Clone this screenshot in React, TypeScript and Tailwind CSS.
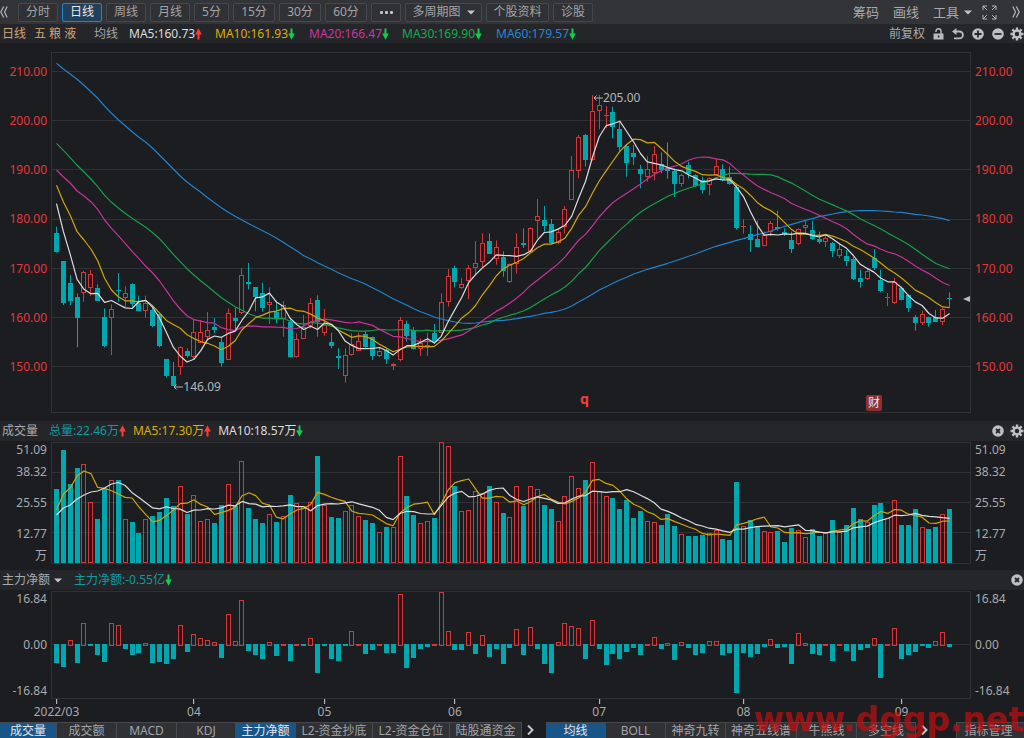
import type { ReactNode } from 'react';
import clsx from 'clsx';

// Each candle: [high, body top, body bottom, low, 1 when the day closed up]
const CANDLES: number[][] = [
  [530, 550, 606, 608, 0], [633, 633, 760, 765, 0], [675, 698, 753, 765, 0], [730, 742, 803, 892, 0],
  [663, 667, 729, 755, 1], [660, 673, 715, 738, 1], [703, 713, 753, 753, 0], [775, 802, 888, 892, 0],
  [763, 776, 803, 915, 1], [669, 719, 723, 755, 0], [709, 728, 743, 770, 1], [700, 702, 762, 770, 0],
  [737, 758, 784, 784, 0], [737, 758, 783, 803, 1], [768, 780, 828, 832, 0], [790, 793, 888, 892, 0],
  [927, 928, 977, 983, 0], [936, 977, 1007, 1007, 0], [889, 890, 950, 975, 1], [895, 904, 918, 923, 0],
  [810, 847, 920, 928, 1], [810, 847, 878, 878, 1], [786, 839, 862, 870, 1], [804, 831, 839, 850, 0],
  [862, 876, 938, 950, 0], [775, 788, 929, 930, 1], [773, 804, 812, 840, 0], [654, 676, 788, 792, 1],
  [639, 697, 701, 718, 0], [712, 712, 740, 784, 0], [698, 728, 773, 785, 0], [712, 757, 766, 822, 1],
  [752, 785, 808, 820, 0], [753, 766, 808, 860, 1], [810, 815, 921, 921, 0], [850, 868, 920, 923, 1],
  [795, 830, 867, 868, 1], [744, 758, 828, 835, 1], [736, 751, 815, 860, 0], [777, 824, 848, 857, 1],
  [848, 875, 888, 895, 0], [895, 919, 923, 957, 0], [895, 914, 979, 998, 1], [850, 882, 914, 917, 1],
  [848, 872, 902, 903, 1], [844, 852, 890, 893, 0], [860, 861, 917, 930, 0], [892, 902, 917, 922, 1],
  [895, 900, 926, 942, 0], [939, 941, 949, 960, 1], [801, 809, 929, 935, 1], [812, 823, 857, 875, 0],
  [831, 841, 898, 898, 0], [865, 880, 897, 918, 1], [848, 886, 890, 918, 1], [822, 850, 876, 882, 0],
  [730, 755, 848, 850, 1], [657, 679, 757, 770, 1], [647, 654, 695, 712, 0], [683, 703, 714, 717, 1],
  [645, 655, 692, 748, 1], [573, 638, 653, 675, 1], [550, 578, 635, 652, 1], [550, 574, 611, 612, 0],
  [571, 590, 626, 644, 1], [604, 622, 662, 680, 0], [640, 643, 697, 699, 1], [550, 590, 643, 671, 1],
  [535, 580, 586, 594, 0], [532, 535, 604, 606, 1], [447, 499, 512, 565, 1], [468, 510, 528, 545, 0],
  [507, 521, 580, 582, 0], [535, 545, 580, 583, 1], [468, 478, 530, 550, 1], [318, 360, 449, 450, 1],
  [255, 260, 362, 385, 1], [252, 254, 330, 350, 0], [135, 184, 329, 332, 1], [135, 166, 182, 238, 1],
  [168, 195, 198, 235, 1], [170, 185, 232, 265, 0], [217, 238, 291, 303, 0], [285, 289, 339, 380, 0],
  [285, 309, 320, 345, 0], [345, 357, 371, 415, 0], [318, 358, 380, 395, 1], [288, 313, 368, 391, 1],
  [307, 342, 360, 370, 0], [277, 355, 362, 386, 0], [355, 362, 401, 441, 0], [370, 376, 403, 410, 1],
  [335, 345, 373, 385, 0], [373, 376, 408, 410, 0], [380, 390, 420, 430, 0], [382, 385, 406, 436, 1],
  [326, 347, 375, 378, 1], [343, 356, 390, 394, 0], [350, 380, 402, 404, 0], [405, 411, 533, 539, 0],
  [508, 527, 529, 551, 1], [525, 551, 571, 606, 0], [512, 566, 590, 590, 0], [545, 556, 587, 589, 1],
  [513, 520, 545, 558, 1], [482, 531, 538, 542, 0], [535, 547, 553, 558, 0], [545, 570, 598, 609, 0],
  [535, 538, 583, 586, 1], [510, 524, 533, 550, 1], [512, 539, 568, 570, 0], [545, 567, 577, 582, 0],
  [555, 563, 577, 591, 1], [576, 580, 603, 621, 0], [580, 598, 617, 624, 1], [600, 618, 633, 648, 0],
  [620, 627, 686, 690, 0], [659, 683, 695, 713, 0], [655, 664, 686, 690, 1], [597, 625, 654, 660, 0],
  [659, 689, 724, 727, 0], [729, 740, 743, 768, 1], [683, 697, 759, 762, 1], [710, 713, 750, 751, 0],
  [733, 735, 773, 786, 0], [795, 801, 819, 842, 0], [782, 793, 819, 825, 1], [800, 801, 818, 830, 0],
  [780, 801, 815, 816, 0], [773, 778, 815, 825, 1], [727, 743, 748, 773, 0],
];

const MA60 = [
  40, 57, 72, 88, 106, 125, 145, 168, 190, 209, 227, 245, 262, 277, 295, 315, 336, 357, 378, 396,
  412, 427, 443, 458, 473, 487, 499, 510, 521, 532, 542, 553, 564, 577, 590, 603, 617, 627, 638, 648,
  658, 668, 677, 686, 694, 703, 713, 724, 735, 746, 756, 766, 776, 785, 793, 801, 807, 812, 816, 819,
  820, 819, 816, 814, 812, 811, 809, 806, 802, 799, 795, 790, 787, 783, 777, 768, 756, 745, 733, 720,
  710, 700, 690, 682, 672, 665, 658, 652, 646, 640, 633, 626, 619, 612, 604, 596, 589, 583, 577, 571,
  566, 560, 554, 549, 543, 536, 529, 523, 517, 511, 506, 500, 496, 492, 488, 485, 483, 482, 482, 482,
  483, 484, 486, 487, 490, 493, 495, 498, 502, 506, 512,
];

const VOLUME = [
  74, 113, 79, 95, 99, 61, 44, 74, 83, 83, 44, 41, 30, 44, 47, 51, 65, 57, 77, 49,
  68, 42, 44, 40, 58, 79, 57, 102, 55, 44, 40, 49, 41, 47, 68, 60, 57, 61, 107, 58,
  46, 45, 52, 58, 47, 43, 40, 31, 36, 36, 107, 67, 48, 40, 42, 45, 121, 117, 77, 52,
  53, 72, 70, 77, 61, 50, 46, 77, 57, 77, 74, 58, 54, 42, 67, 87, 75, 83, 101, 72,
  67, 65, 54, 63, 45, 52, 42, 41, 38, 49, 37, 29, 27, 27, 28, 30, 33, 24, 23, 81,
  37, 43, 37, 32, 31, 32, 21, 35, 33, 26, 34, 27, 30, 43, 31, 38, 55, 44, 41, 58,
  60, 45, 63, 38, 38, 54, 36, 34, 36, 49, 54,
];

const NET_FLOW = [
  -18, -22, 5, -18, 22, -1, -10, -17, 22, 20, -4, -10, -8, 2, -18, -17, -19, -14, 20, -7,
  11, 7, 5, 3, -13, 31, 4, 45, -6, -10, -14, 3, -11, 1, -16, 1, -1, 7, -28, -1,
  -14, -16, -1, 14, 1, -9, -5, 1, -8, -8, 51, -23, -13, -4, -2, 1, 53, 14, -5, -5,
  13, -9, 10, -12, -4, -19, -3, 16, -10, 18, -4, -19, -28, 3, 22, 19, 17, -14, 25, -4,
  -20, -9, -14, -7, -3, -10, 1, 8, -4, 2, -15, 3, -3, -10, -8, 4, 4, -10, -8, -48,
  -8, -12, -9, -2, 6, -3, -2, -19, 12, 2, -9, -10, 1, -16, 1, -6, -16, -5, -3, 7,
  -33, 1, 17, -14, -10, -7, -1, -3, 4, 13, -2,
];

const TEAL = '#00a7ae';
const RED = '#d63638';

const PLOT_W = 920;
const xAt = (i: number) => 5.5 + i * 6.87;
const barLeft = (i: number) => Math.round(xAt(i) - 2.5);
const priceY = (v: number) => v / 3 - 2;

// Moving average; the first days come from `seed`, as their history is off the chart
function movingAverage(values: number[], days: number, seed: number[]) {
  return values.map((_, i) => {
    if (i < days - 1) return seed[i];
    const slice = values.slice(i - days + 1, i + 1);
    return slice.reduce((a, b) => a + b, 0) / days;
  });
}

const closes = CANDLES.map(c => (c[4] ? c[1] : c[2]));
const MA5 = movingAverage(closes, 5, [461, 545, 613, 688]);
const MA10 = movingAverage(closes, 10, [406, 456, 496, 545, 570, 597, 632, 685, 720]);
const MA20 = movingAverage(closes, 20, [
  360, 381, 399, 423, 438, 455, 478, 510, 535, 557, 580, 604, 626, 649, 669, 693, 722, 752, 777,
]);
const MA30 = movingAverage(closes, 30, [
  280, 301, 323, 346, 366, 387, 410, 436, 457, 474, 490, 505, 518, 532, 548, 566, 589, 613, 635, 656,
  675, 693, 709, 726, 743, 757, 770, 781, 791,
]);
const VOL_MA5 = movingAverage(VOLUME, 5, [53, 69, 75, 87]);
const VOL_MA10 = movingAverage(VOLUME, 10, [48, 55, 58, 64, 68, 71, 72, 75, 79]);

const Line = ({ values, toY, color }: { values: number[]; toY: (v: number) => number; color: string }) => (
  <polyline
    fill="none"
    stroke={color}
    strokeWidth={1.2}
    strokeLinejoin="round"
    points={values.map((v, i) => `${xAt(i).toFixed(1)},${toY(v).toFixed(1)}`).join(' ')}
  />
);

const Bar = ({ i, top, height, up }: { i: number; top: number; height: number; up: boolean }) =>
  up && height > 1 ? (
    <rect x={barLeft(i) + 0.5} y={top + 0.5} width={4} height={height - 1} fill="none" stroke={RED} />
  ) : (
    <rect x={barLeft(i)} y={top} width={5} height={height} fill={up ? RED : TEAL} />
  );

const Frame = ({ height, grid }: { height: number; grid: number[] }) => (
  <g stroke="#303135" fill="none">
    <rect x={0.5} y={0.5} width={PLOT_W - 1} height={height - 1} />
    {grid.map(y => (
      <line key={y} x1={0} x2={PLOT_W} y1={y + 0.5} y2={y + 0.5} />
    ))}
  </g>
);

const PriceChart = () => (
  <svg viewBox="0 0 920 361" preserveAspectRatio="none" className="block size-full" aria-label="K线图">
    <Frame height={361} grid={[19, 68, 117, 167, 216, 265, 314]} />
    {CANDLES.map(([high, top, bottom, low, up], i) => {
      const y1 = Math.round(priceY(top));
      const y2 = Math.max(Math.round(priceY(bottom)), y1 + 1);
      const cx = barLeft(i) + 2.5;
      return (
        <g key={i}>
          <path
            d={`M${cx} ${priceY(high)}V${y1}M${cx} ${y2}V${Math.max(priceY(low), y2)}`}
            stroke={up ? RED : TEAL}
          />
          <Bar i={i} top={y1} height={y2 - y1} up={up === 1} />
        </g>
      );
    })}
    <Line values={MA60} toY={priceY} color="#1f83d0" />
    <Line values={MA30} toY={priceY} color="#14a048" />
    <Line values={MA20} toY={priceY} color="#c8329a" />
    <Line values={MA10} toY={priceY} color="#d0a508" />
    <Line values={MA5} toY={priceY} color="#dcdcdc" />
    <path d="M912 247L919 244V250Z" fill="#b9babc" />
  </svg>
);

const VolumeChart = () => (
  <svg viewBox="0 0 920 122" preserveAspectRatio="none" className="block size-full" aria-label="成交量图">
    <Frame height={122} grid={[30, 60, 90]} />
    {VOLUME.map((v, i) => (
      <Bar key={i} i={i} top={121 - v} height={v} up={CANDLES[i][4] === 1} />
    ))}
    <Line values={VOL_MA5} toY={v => 121 - v} color="#d0a508" />
    <Line values={VOL_MA10} toY={v => 121 - v} color="#dcdcdc" />
  </svg>
);

const NetFlowChart = () => (
  <svg viewBox="0 0 920 108" preserveAspectRatio="none" className="block size-full" aria-label="主力净额图">
    <Frame height={108} grid={[53]} />
    {NET_FLOW.map((v, i) => (
      <Bar key={i} i={i} top={v > 0 ? 54 - v : 53} height={v > 0 ? v + 1 : 1 - v} up={v > 0} />
    ))}
  </svg>
);

const Arrow = ({ up = false }: { up?: boolean }) => (
  <svg viewBox="0 0 7 12" className={clsx('h-3 w-[7px] shrink-0', up && 'rotate-180')}>
    <path d="M2.500 0.500H4.500V5.500H6.800L3.500 11.800L0.200 5.500H2.500Z" fill={up ? '#ff3a3a' : '#10cf4e'} />
  </svg>
);

const Caret = () => (
  <svg viewBox="0 0 8 5" className="pointer-events-none h-[5px] w-2 shrink-0">
    <path d="M0 0.500H8L4 4.500Z" fill="#c3c4c6" />
  </svg>
);

const Chevrons = ({ left = false }: { left?: boolean }) => (
  <svg viewBox="0 0 8 12" className={clsx('h-3 w-2', left && 'rotate-180')} fill="none" stroke="#b4b5b8" strokeWidth={1.2}>
    <path d="M0.800 0.500L3.500 6L0.800 11.500M4.300 0.500L7.200 6L4.300 11.500" />
  </svg>
);

const ExpandIcon = () => (
  <svg viewBox="0 0 15 15" className="size-[15px]" fill="none" stroke="#b4b5b8">
    <path d="M5 1H1V5M1 1L5 5M10 1H14V5M14 1L10 5M5 14H1V10M1 14L5 10M10 14H14V10M14 14L10 10" />
  </svg>
);

const LockIcon = () => (
  <svg viewBox="0 0 11 12" className="h-3 w-[11px]">
    <path d="M3 4V3A2.500 2.300 0 0 1 8 3V6" fill="none" stroke="#b9babc" strokeWidth={1.4} />
    <path d="M0.500 5.500H10.500V11.500H0.500ZM4.900 7.500V9.500H6.300V7.500Z" fill="#b9babc" fillRule="evenodd" />
  </svg>
);

const UndoIcon = () => (
  <svg viewBox="0 0 12 12" className="size-3">
    <path d="M3 3.500H7.500A3.300 3.300 0 0 1 7.500 10.300H2" fill="none" stroke="#b9babc" strokeWidth={1.8} />
    <path d="M0 3.500L4.500 0V7Z" fill="#b9babc" />
  </svg>
);

const RoundIcon = ({ d }: { d: string }) => (
  <svg viewBox="0 0 12 12" className="size-3">
    <circle cx={6} cy={6} r={5.8} fill="#bfc0c2" />
    <path d={d} stroke="#25262a" strokeWidth={1.8} />
  </svg>
);

const CROSS = 'M4 4L8 8M8 4L4 8';

const GearIcon = () => (
  <svg viewBox="0 0 14 14" className="size-[14px]">
    <g stroke="#bfc0c2" strokeWidth={2.4}>
      <path d="M7 0.500V3.500M7 10.500V13.500M0.500 7H3.500M10.500 7H13.500M2.400 2.400L4.500 4.500M9.500 9.500L11.600 11.600M11.600 2.400L9.500 4.500M4.500 9.500L2.400 11.600" />
    </g>
    <circle cx={7} cy={7} r={3.4} fill="none" stroke="#bfc0c2" strokeWidth={2.4} />
  </svg>
);

const IconButton = ({ label, children }: { label: string; children: ReactNode }) => (
  <button type="button" aria-label={label} className="flex items-center justify-center">
    {children}
  </button>
);

const periods = [
  { name: '分时', width: 'w-10' },
  { name: '日线', width: 'w-10', active: true },
  { name: '周线', width: 'w-10' },
  { name: '月线', width: 'w-10' },
  { name: '5分', width: 'w-[35px]' },
  { name: '15分', width: 'w-[42px]' },
  { name: '30分', width: 'w-[42px]' },
  { name: '60分', width: 'w-[42px]' },
];

const boxed = 'flex h-[19px] items-center justify-center rounded-xs border';
const boxedIdle = 'border-[#47484c] bg-[#303135] text-[#a3a4a7]';

const Toolbar = () => (
  <div className="flex h-6 items-center justify-between bg-[#333438]">
    <div className="flex items-center gap-1">
      <div className="flex w-[14px] justify-start">
        <IconButton label="向左">
          <Chevrons left />
        </IconButton>
      </div>
      {periods.map(p => (
        <button
          key={p.name}
          type="button"
          className={clsx(boxed, p.width, p.active ? 'border-[#1b86d2] bg-[#22405a] text-[#e8e9ea]' : boxedIdle)}
        >
          {p.name}
        </button>
      ))}
      <button type="button" aria-label="更多周期" className={clsx(boxed, boxedIdle, 'w-[30px]')}>
        <svg viewBox="0 0 13 3" className="h-[3px] w-[13px]" fill="#c3c4c6">
          <rect width={3} height={3} rx={1} />
          <rect x={5} width={3} height={3} rx={1} />
          <rect x={10} width={3} height={3} rx={1} />
        </svg>
      </button>
      <div className={clsx(boxed, boxedIdle, 'w-[77px] gap-1')}>
        <select aria-label="多周期图" className="w-[50px] appearance-none bg-transparent outline-none">
          <option>多周期图</option>
        </select>
        <Caret />
      </div>
      <button type="button" className={clsx(boxed, boxedIdle, 'w-[63px]')}>个股资料</button>
      <button type="button" className={clsx(boxed, boxedIdle, 'w-10')}>诊股</button>
    </div>
    <div className="flex items-center gap-[14px] pr-1 text-[13px] text-[#a9aaad]">
      <button type="button">筹码</button>
      <button type="button">画线</button>
      <button type="button" aria-haspopup="menu" className="flex items-center gap-[5px]">
        工具
        <Caret />
      </button>
      <div className="-ml-1 flex items-center gap-[15px]">
        <IconButton label="全屏">
          <ExpandIcon />
        </IconButton>
        <IconButton label="向右">
          <Chevrons />
        </IconButton>
      </div>
    </div>
  </div>
);

const averages = [
  { text: 'MA5:160.73', up: true, className: 'w-[86px] text-[#dcdcdc]' },
  { text: 'MA10:161.93', className: 'w-[94px] text-[#d9ae0a]' },
  { text: 'MA20:166.47', className: 'w-[93px] text-[#cf349f]' },
  { text: 'MA30:169.90', className: 'w-[94px] text-[#17ab4d]' },
  { text: 'MA60:179.57', className: 'w-[94px] text-[#2288d8]' },
];

const AverageBar = () => (
  <div className="flex h-[19px] items-center justify-between overflow-hidden bg-[#25262a]">
    <div className="flex items-center whitespace-nowrap pl-0.5">
      <span className="w-8 text-[#d3a478]">日线</span>
      <span className="w-15 text-[#d3a478]">五 粮 液</span>
      <span className="w-[35px] text-[#a3a4a7]">均线</span>
      {averages.map(a => (
        <span key={a.text} className={clsx('flex items-center', a.className)}>
          {a.text}
          <Arrow up={a.up} />
        </span>
      ))}
    </div>
    <div className="flex items-center gap-2">
      <button type="button" className="text-[#a9aaad]">前复权</button>
      <IconButton label="锁定"><LockIcon /></IconButton>
      <IconButton label="撤销"><UndoIcon /></IconButton>
      <IconButton label="放大"><RoundIcon d="M6 2.500V9.500M2.500 6H9.500" /></IconButton>
      <div className="flex items-center gap-1.5">
        <IconButton label="缩小"><RoundIcon d="M2.500 6H9.500" /></IconButton>
        <IconButton label="设置"><GearIcon /></IconButton>
      </div>
    </div>
  </div>
);

// A plot with the same scale labels at both sides
const Panel = ({ labels, className, children }: { labels: ReactNode; className: string; children: ReactNode }) => (
  <div className={clsx('flex', className)}>
    <div className="flex w-[51px] flex-col pr-1 text-right leading-4">{labels}</div>
    <div className="relative min-w-0 flex-1">{children}</div>
    <div className="flex w-[53px] flex-col pl-1 text-left leading-4">{labels}</div>
  </div>
);

const PriceLabels = () => (
  <div className="flex h-full flex-col justify-between pt-3 pb-[38px] text-[#e63638]">
    {['210.00', '200.00', '190.00', '180.00', '170.00', '160.00', '150.00'].map(p => (
      <span key={p}>{p}</span>
    ))}
  </div>
);

const VolumeLabels = () => (
  <div className="flex h-full flex-col justify-between text-[#a9aaad]">
    <div className="flex flex-col gap-1.5">
      <span>51.09</span>
      <span>38.32</span>
    </div>
    <span>25.55</span>
    <div className="flex flex-col gap-1.5">
      <span>12.77</span>
      <span>万</span>
    </div>
  </div>
);

const NetFlowLabels = () => (
  <div className="flex h-full flex-col justify-between text-[#a9aaad]">
    <span>16.84</span>
    <span>0.00</span>
    <span>-16.84</span>
  </div>
);

const months = [
  { name: '2022/03', day: 0 },
  { name: '04', day: 20 },
  { name: '05', day: 39 },
  { name: '06', day: 58 },
  { name: '07', day: 79 },
  { name: '08', day: 100 },
  { name: '09', day: 123 },
];

const TimeAxis = () => (
  <div className="relative mr-[53px] ml-[51px] h-[23px] text-[#a9aaad]">
    {months.map(m => (
      <div
        key={m.name}
        className="absolute top-0 flex -translate-x-1/2 flex-col items-center"
        style={{ left: `${(xAt(m.day) / PLOT_W) * 100}%` }}
      >
        <span className="h-[5px] w-px bg-[#d0d0d2]" />
        <span className="leading-4">{m.name}</span>
      </div>
    ))}
  </div>
);

const indicatorTabs = [
  { name: '成交量', width: 'w-[57px]', active: true },
  { name: '成交额', width: 'w-[60px]' },
  { name: 'MACD', width: 'w-[60px]' },
  { name: 'KDJ', width: 'w-[59px]' },
  { name: '主力净额', width: 'w-[60px]', active: true },
  { name: 'L2-资金抄底', width: 'w-[77px]' },
  { name: 'L2-资金仓位', width: 'w-[77px]' },
  { name: '陆股通资金', width: 'w-[72px]' },
];

const overlayTabs = [
  { name: '均线', width: 'w-[60px]', active: true },
  { name: 'BOLL', width: 'w-[60px]' },
  { name: '神奇九转', width: 'w-[60px]' },
  { name: '神奇五线谱', width: 'w-[71px]' },
  { name: '牛熊线', width: 'w-[60px]' },
  { name: '多空线', width: 'w-[59px]' },
];

const Tab = ({ name, width, active }: { name: string; width: string; active?: boolean }) => (
  <button
    type="button"
    className={clsx(
      'h-4 border-t border-r border-[#48494d] leading-4 whitespace-nowrap',
      width,
      active ? 'bg-[#18568a] text-[#e4e5e6]' : 'bg-[#303135] text-[#a3a4a7]',
    )}
  >
    {name}
  </button>
);

const More = () => (
  <svg viewBox="0 0 7 10" className="h-[10px] w-[7px]" fill="none" stroke="#c3c4c6" strokeWidth={2}>
    <path d="M1 0.500L5.500 5L1 9.500" />
  </svg>
);

const BottomTabs = () => (
  <div className="flex h-4 items-center justify-between overflow-hidden">
    <div className="flex items-center">
      {indicatorTabs.map(t => (
        <Tab key={t.name} {...t} />
      ))}
      <div className="flex w-6 justify-center pr-2">
        <IconButton label="更多指标"><More /></IconButton>
      </div>
      {overlayTabs.map(t => (
        <Tab key={t.name} {...t} />
      ))}
      <div className="flex w-5 justify-center pr-1">
        <IconButton label="更多主图指标"><More /></IconButton>
      </div>
    </div>
    <button type="button" className="h-4 w-[68px] border-t border-l border-[#48494d] bg-[#303135] pr-1 leading-4 text-[#a3a4a7]">
      指标管理
    </button>
  </div>
);

const App = () => (
  <div className="relative flex h-screen min-h-[620px] flex-col overflow-hidden bg-[#1c1d21] font-['Noto_Sans','Noto_Sans_CJK_SC',sans-serif] text-[12px] leading-4">
    <Toolbar />
    <AverageBar />

    <Panel className="mt-[9px] mb-2 min-h-0 flex-1" labels={<PriceLabels />}>
      <PriceChart />
      {/* Highest and lowest price */}
      <span className="absolute top-[10.500%] left-[58.900%] flex items-center text-[#b4b5b8]">
        <svg viewBox="0 0 10 6" className="h-1.5 w-[10px]" fill="none" stroke="#b4b5b8">
          <path d="M10 3H1M3.500 0.500L1 3L3.500 5.500" />
        </svg>
        205.00
      </span>
      <span className="absolute top-[90.600%] left-[13.300%] flex items-center text-[#b4b5b8]">
        <svg viewBox="0 0 10 6" className="h-1.5 w-[10px]" fill="none" stroke="#b4b5b8">
          <path d="M10 3H1M3.500 0.500L1 3L3.500 5.500" />
        </svg>
        146.09
      </span>
      <span className="absolute top-[94%] left-[57.500%] text-[14px] font-bold text-[#ff3a3a]">q</span>
      <span className="absolute top-[95%] left-[88.600%] size-4 rounded-xs bg-[#8c3033] text-center text-[#e4e5e6]">财</span>
    </Panel>

    <div className="mb-px flex h-5 items-center justify-between overflow-hidden bg-[#25262a]">
      <div className="flex items-center gap-[7px] pl-0.5">
        <span className="mr-1 text-[#a9aaad]">成交量</span>
        <span className="flex items-center text-[#0f9aa1]">总量:22.46万<Arrow up /></span>
        <span className="flex items-center text-[#d9ae0a]">MA5:17.30万<Arrow up /></span>
        <span className="flex items-center text-[#dcdcdc]">MA10:18.57万<Arrow /></span>
      </div>
      <div className="flex items-center gap-1.5">
        <IconButton label="关闭成交量"><RoundIcon d={CROSS} /></IconButton>
        <IconButton label="成交量设置"><GearIcon /></IconButton>
      </div>
    </div>
    <Panel className="mb-1.5 h-[122px]" labels={<VolumeLabels />}>
      <VolumeChart />
    </Panel>

    <div className="mb-px flex h-5 items-center justify-between bg-[#25262a] pr-px">
      <div className="flex items-center pl-0.5">
        <select aria-label="指标" className="w-[52px] appearance-none bg-transparent text-[#a9aaad] outline-none">
          <option>主力净额</option>
        </select>
        <Caret />
        <span className="ml-3 flex items-center text-[#0f9aa1]">主力净额:-0.55亿<Arrow /></span>
      </div>
      <IconButton label="关闭主力净额"><RoundIcon d={CROSS} /></IconButton>
    </div>
    <Panel className="h-[108px]" labels={<NetFlowLabels />}>
      <NetFlowChart />
    </Panel>

    <TimeAxis />
    <BottomTabs />

    <span className="pointer-events-none absolute right-0 bottom-0 font-['DejaVu_Sans',sans-serif] text-[33px] leading-9 font-bold text-[#c40f10]/70">
      www.dggp.net
    </span>
  </div>
);

export default App;
